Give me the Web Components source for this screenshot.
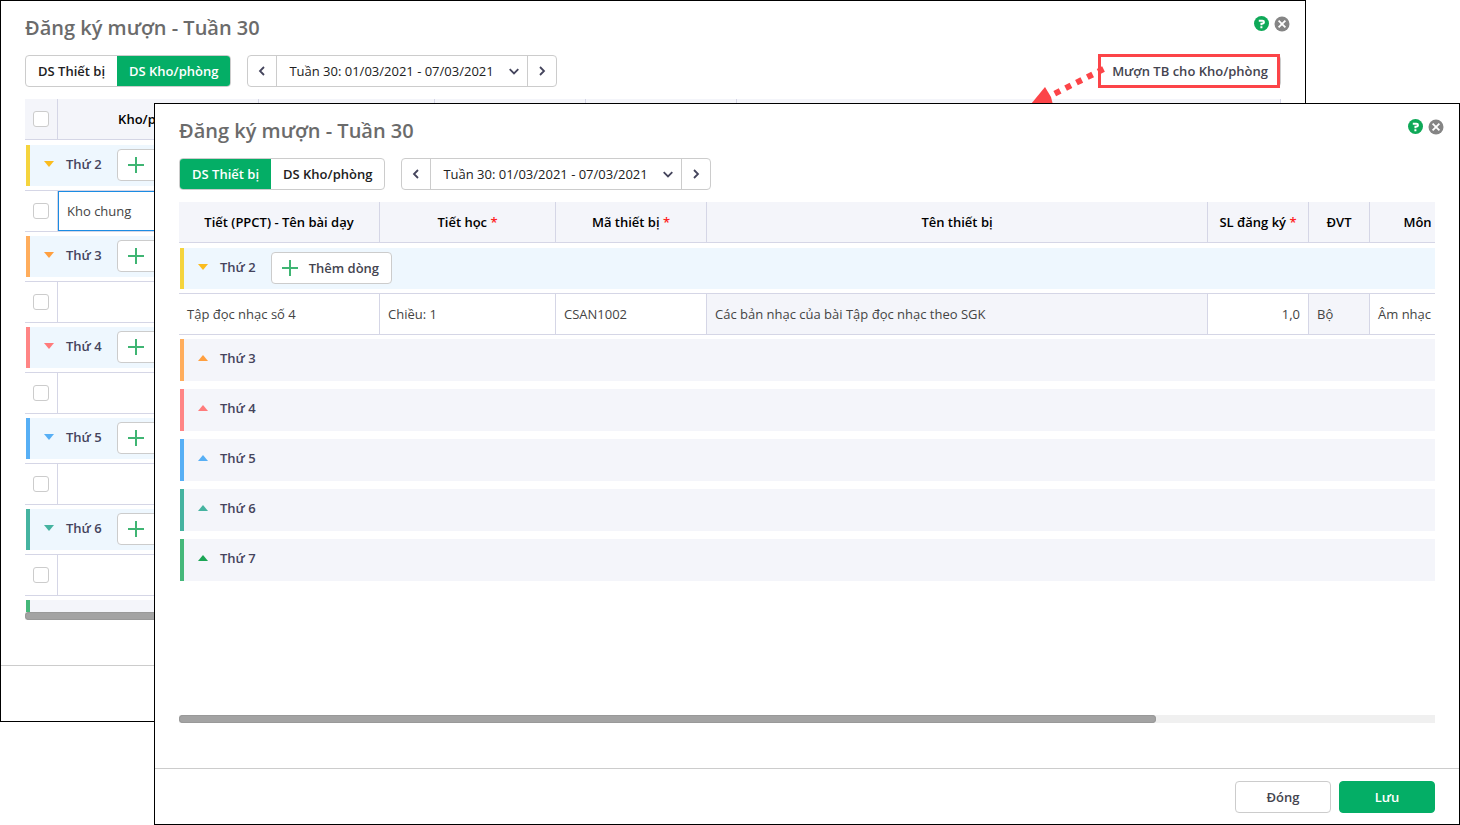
<!DOCTYPE html>
<html lang="vi">
<head>
<meta charset="utf-8">
<meta name="viewport" content="width=device-width, initial-scale=1">
<title>Đăng ký mượn - Tuần 30</title>
<style>
  html, body { margin: 0; background: #fff; }
  body { font: 13px/20px "Open Sans", "Noto Sans", sans-serif; color: #212121; }
</style>
</head>
<body>
<window-stage>
  <app-window slot="back" heading="Đăng ký mượn - Tuần 30">
    <segment-tabs slot="tools" items="DS Thiết bị|DS Kho/phòng" active="1"></segment-tabs>
    <week-picker slot="tools"></week-picker>
    <marked-action slot="actions">Mượn TB cho Kho/phòng</marked-action>
    <room-table></room-table>
  </app-window>
  <app-window slot="front" heading="Đăng ký mượn - Tuần 30">
    <segment-tabs slot="tools" items="DS Thiết bị|DS Kho/phòng" active="0"></segment-tabs>
    <week-picker slot="tools"></week-picker>
    <device-table></device-table>
    <text-button slot="footer">Đóng</text-button>
    <text-button slot="footer" primary>Lưu</text-button>
  </app-window>
</window-stage>

<script>
const BASE = `
  *, *::before { box-sizing: border-box; }
  button, input, select { font: inherit; color: inherit; margin: 0; padding: 0; }
  button { background: none; border: 0; cursor: pointer; }
  svg { display: block; flex: none; }
`;

function define(name, render) {
  customElements.define(name, class extends HTMLElement {
    constructor() {
      super();
      this.attachShadow({ mode: 'open' });
    }
    connectedCallback() {
      const t = document.createElement('template');
      t.innerHTML = render(this);
      this.shadowRoot.replaceChildren(t.content.cloneNode(true));
    }
  });
}

/* Two overlapping windows share one grid cell; margins set the cascade. */
define('window-stage', () => `
  <style>
    :host { display: grid; grid-template: minmax(0, 1fr) / minmax(0, 1fr); height: 100vh; min-height: 600px; min-width: 900px; }
    ::slotted(*) { grid-area: 1 / 1; }
    ::slotted([slot=back]) { margin: 0 154px 103px 0; }
    ::slotted([slot=front]) { margin: 103px 0 0 154px; z-index: 1; }
  </style>
  <slot name="back"></slot><slot name="front"></slot>`);

define('app-window', el => `
  <style>${BASE}
    :host { display: flex; flex-direction: column; box-sizing: border-box; min-height: 0; background: #fff; border: 1px solid #000; }
    header { display: flex; align-items: flex-start; justify-content: space-between; padding: 12px 15px 0 24px; }
    h1 { margin: 0; font-size: 20px; line-height: 30px; font-weight: 600; color: #6b6b6b; }
    .icons { display: flex; gap: 5px; padding-top: 3px; }
    .icons button { width: 16px; height: 16px; }
    .tools { display: flex; gap: 16px; padding: 12px 24px; }
    .actions { margin-left: auto; }
    main { flex: 1; min-height: 0; padding: 0 24px; display: flex; flex-direction: column; }
    footer { display: flex; justify-content: flex-end; gap: 8px; height: 56px; margin-top: 45px; padding: 12px 24px 0; border-top: 1px solid #ccc; }
  </style>
  <header>
    <h1>${el.getAttribute('heading')}</h1>
    <div class="icons">
      <button aria-label="Trợ giúp"><svg width="16" height="16" viewBox="0 0 16 16"><circle cx="8.500" cy="7.500" r="7.500" fill="#0fa958"/><path d="M5.800 4.700h3.600q1.600 0 1.600 1.300 0 1.700-2.600 1.700v1.600M7.400 11.200h2" fill="none" stroke="#fff" stroke-width="1.900"/></svg></button>
      <button aria-label="Đóng cửa sổ"><svg width="16" height="16" viewBox="0 0 16 16"><circle cx="8" cy="8" r="7.500" fill="#858585"/><path d="M4.600 4.600l6.800 6.800M11.400 4.600l-6.800 6.800" stroke="#fff" stroke-width="1.800"/></svg></button>
    </div>
  </header>
  <div class="tools"><slot name="tools"></slot><div class="actions"><slot name="actions"></slot></div></div>
  <main><slot></slot></main>
  <footer><slot name="footer"></slot></footer>`);

define('segment-tabs', el => `
  <style>${BASE}
    :host { display: block; }
    div { display: flex; height: 32px; border: 1px solid #ccc; border-radius: 4px; overflow: hidden; background: #fff; }
    button { padding: 0 12px; font-weight: 600; }
    button[aria-pressed=true] { background: #04ae66; color: #fff; }
  </style>
  <div role="group" aria-label="Danh sách">${el.getAttribute('items').split('|').map((t, i) =>
    `<button aria-pressed="${i === +el.getAttribute('active')}">${t}</button>`).join('')}</div>`);

define('week-picker', () => `
  <style>${BASE}
    :host { display: flex; box-sizing: border-box; width: 310px; height: 32px; border: 1px solid #ccc; border-radius: 4px; background: #fff; }
    button { width: 28px; display: grid; place-items: center; }
    .field { flex: 1; display: grid; align-items: center; border: solid #ccc; border-width: 0 1px; }
    select { grid-area: 1 / 1; appearance: none; border: 0; background: none; height: 30px; padding: 0 32px 0 12px; width: 100%; }
    .field svg { grid-area: 1 / 1; justify-self: end; margin-right: 7px; pointer-events: none; }
    path { fill: none; stroke: #44445c; stroke-width: 1.8; }
  </style>
  <button aria-label="Tuần trước"><svg width="12" height="12" viewBox="0 0 12 12"><path d="M8 2L4 6l4 4"/></svg></button>
  <div class="field">
    <select aria-label="Tuần"><option>Tuần 30: 01/03/2021 - 07/03/2021</option></select>
    <svg width="12" height="12" viewBox="0 0 12 12"><path d="M1.700 4.200L6 8.400l4.300-4.200"/></svg>
  </div>
  <button aria-label="Tuần sau"><svg width="12" height="12" viewBox="0 0 12 12"><path d="M4 2l4 4-4 4"/></svg></button>`);

/* Action button with a callout frame and a dotted arrow leading down-left. */
define('marked-action', () => `
  <style>${BASE}
    :host { display: block; position: relative; }
    button { height: 32px; padding: 0 12px; border: 1px solid #ccc; border-radius: 4px; font-weight: 600; color: #44444f; display: block; }
    .frame { position: absolute; inset: -1px 1px -1px -1px; border: 3px solid #fc4448; pointer-events: none; }
    .arrow { position: absolute; right: 176px; top: 10px; pointer-events: none; }
  </style>
  <button><slot></slot></button>
  <span class="frame"></span>
  <svg class="arrow" width="76" height="42" viewBox="0 0 76 42">
    <path d="M74.500 4L25 29" stroke="#fc4448" stroke-width="6" stroke-dasharray="6 6.150"/>
    <path d="M2 39L16 22l6 10 2 8z" fill="#fc4448"/>
  </svg>`);

define('text-button', el => `
  <style>${BASE}
    :host { display: block; }
    button { display: block; width: 96px; height: 32px; border: 1px solid #ccc; border-radius: 4px; font-weight: 600; color: #44444f; }
    :host([primary]) button { background: #04ae66; border-color: #04ae66; color: #fff; }
  </style>
  <button><slot></slot></button>`);

define('scroll-track', () => `
  <style>
    :host { display: block; height: 8px; background: #f0f0f0; }
    div { height: 8px; width: 77.8%; border-radius: 4px; background: #a3a3a3; box-shadow: inset 0 0 0 1px #999; }
  </style>
  <div></div>`);

const TABLE = `${BASE}
  :host { display: flex; flex-direction: column; flex: 1; min-height: 0; }
  .view { flex: 1; min-height: 0; overflow: hidden; }
  table { table-layout: fixed; border-collapse: separate; border-spacing: 0; width: 100%; }
  th { height: 41px; padding: 0; background: #f4f5fa; border: solid #d5d6e6; border-width: 0 1px 1px 0; font-weight: 600; color: #000; white-space: nowrap; }
  th i { font-style: normal; color: #f22; }
  td { padding: 0; }
  tr.row td { height: 42px; padding: 0 8px; border: solid #d5d6e6; border-width: 1px 1px 1px 0; color: #444; }
  tr.row td.ro { background: #f4f5fa; }
  tr.row td.num { text-align: right; }
  td.day { padding: 4px 0 4px 1px; }
  tbody:first-of-type td.day { padding-top: 5px; }
  .bar { display: flex; height: 42px; padding-top: 4px; padding-left: 14px; border-left: 4px solid var(--c); background: #f4f5fa; }
  .bar.open { height: 41px; background: #eef7fe; }
  .toggle { display: flex; align-items: center; height: 32px; gap: 12px; padding-bottom: 2px; font-weight: 600; color: #44445c; }
  .add { display: flex; align-items: center; gap: 11px; height: 32px; margin-left: 15px; padding: 0 12px 0 10px; border: 1px solid #ccc; border-radius: 4px; background: #fff; font-weight: 600; color: #44444f; white-space: nowrap; }
  input[type=checkbox] { appearance: none; display: block; width: 16px; height: 16px; margin: 0 auto; border: 1px solid #ccc; border-radius: 3px; background: #fff; }
  tr.row td.pick { padding: 0; }
  tr.row td.edit { padding: 0; }
  td.edit input { display: block; width: 100%; height: 40px; padding: 0 8px; border: 1px solid #1b8ce3; outline: 0; background: #fff; }
`;

const DAYS = [
  ['Thứ 2', '#f5d43d', '#fbbc1e'], ['Thứ 3', '#ffad5c', '#ff9f3f'], ['Thứ 4', '#ff8585', '#ff7b7b'],
  ['Thứ 5', '#57aff5', '#57aff5'], ['Thứ 6', '#45b3a0', '#45b3a0'], ['Thứ 7', '#45b87a', '#1ba555'],
];

const dayRow = ([name, bar, tri], open, span) => `
  <tr><td class="day" colspan="${span}"><div class="bar ${open ? 'open' : ''}" style="--c:${bar}">
    <button class="toggle" aria-expanded="${open}">
      <svg width="10" height="6" viewBox="0 0 10 6"><path d="${open ? 'M0 0h10L5 6z' : 'M0 6h10L5 0z'}" fill="${tri}"/></svg>${name}
    </button>
    ${open ? `<button class="add"><svg width="16" height="16" viewBox="0 0 16 16"><path d="M8 0v16M0 8h16" stroke="#3fb573" stroke-width="2"/></svg>Thêm dòng</button>` : ''}
  </div></td></tr>`;

define('device-table', () => `
  <style>${TABLE}
    table { width: calc(100% + 31px); }
  </style>
  <div class="view"><table>
    <colgroup><col style="width:201px"><col style="width:176px"><col style="width:151px"><col><col style="width:101px"><col style="width:61px"><col style="width:96px"></colgroup>
    <thead><tr><th>Tiết (PPCT) - Tên bài dạy</th><th>Tiết học <i>*</i></th><th>Mã thiết bị <i>*</i></th><th>Tên thiết bị</th><th>SL đăng ký <i>*</i></th><th>ĐVT</th><th>Môn</th></tr></thead>
    ${DAYS.map((d, i) => `<tbody>${dayRow(d, i === 0, 7)}${i ? '' : `
      <tr class="row"><td>Tập đọc nhạc số 4</td><td>Chiều: 1</td><td>CSAN1002</td><td class="ro">Các bản nhạc của bài Tập đọc nhạc theo SGK</td><td class="num">1,0</td><td class="ro">Bộ</td><td>Âm nhạc</td></tr>`}</tbody>`).join('')}
  </table></div>
  <scroll-track></scroll-track>`);

define('room-table', () => `
  <style>${TABLE}</style>
  <div class="view"><table>
    <colgroup><col style="width:33px"><col style="width:201px"><col style="width:176px"><col style="width:151px"><col style="width:151px"><col></colgroup>
    <thead><tr><th><input type="checkbox" aria-label="Chọn tất cả"></th><th>Kho/phòng <i>*</i></th><th></th><th></th><th></th><th></th></tr></thead>
    ${DAYS.map((d, i) => `<tbody>${dayRow(d, i < 5, 6)}${i > 4 ? '' : `
      <tr class="row"><td class="pick"><input type="checkbox" aria-label="Chọn ${d[0]}"></td>${i ? '<td></td>' : '<td class="edit"><input aria-label="Kho/phòng" value="Kho chung"></td>'}<td></td><td></td><td></td><td></td></tr>`}</tbody>`).join('')}
  </table></div>
  <scroll-track></scroll-track>`);
</script>
</body>
</html>
